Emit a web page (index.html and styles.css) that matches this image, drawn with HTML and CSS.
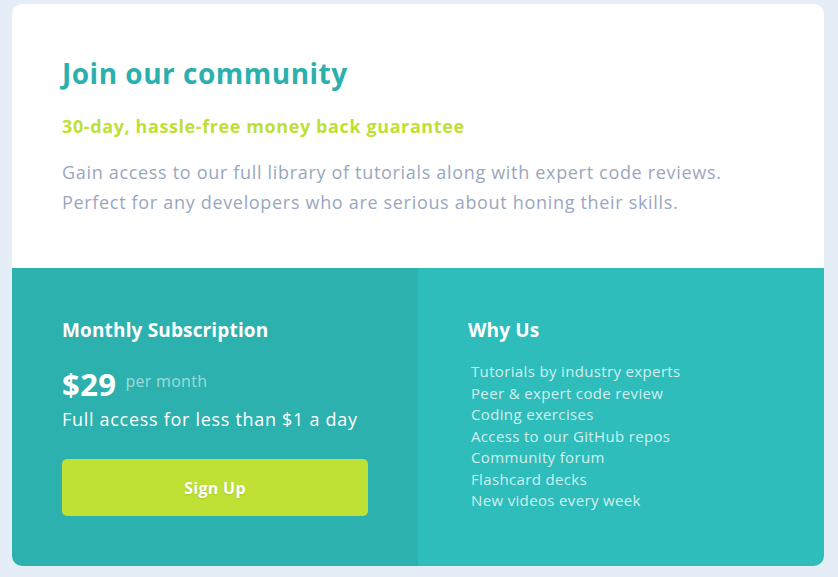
FILE: index.html
```html
<!DOCTYPE html>
<html lang="en">
<head>
<meta charset="utf-8">
<title>Single price grid</title>
<link rel="stylesheet" href="styles.css">
</head>
<body>
<main class="card">
  <section class="intro">
    <h1 class="title">Join our community</h1>
    <h2 class="guarantee">30-day, hassle-free money back guarantee</h2>
    <p class="desc">Gain access to our full library of tutorials along with expert code reviews. Perfect for any developers who are serious about honing their skills.</p>
  </section>
  <div class="bottom">
    <section class="subscription">
      <h3 class="heading">Monthly Subscription</h3>
      <div class="price-row"><span class="price">$29</span><span class="per">per month</span></div>
      <p class="access">Full access for less than $1 a day</p>
      <button class="signup">Sign Up</button>
    </section>
    <section class="why">
      <h3 class="heading">Why Us</h3>
      <ul class="features">
        <li>Tutorials by industry experts</li>
        <li>Peer &amp; expert code review</li>
        <li>Coding exercises</li>
        <li>Access to our GitHub repos</li>
        <li>Community forum</li>
        <li>Flashcard decks</li>
        <li>New videos every week</li>
      </ul>
    </section>
  </div>
</main>
</body>
</html>
```
FILE: styles.css
```css
* { box-sizing: border-box; }
html, body { margin: 0; padding: 0; }
body {
  background: #e5eef6;
  font-family: "Open Sans", "Liberation Sans", sans-serif;
  width: 838px;
  height: 577px;
  overflow: hidden;
}
.card {
  margin: 4px 0 0 12px;
  width: 812px;
  height: 562px;
  border-radius: 10px;
  overflow: hidden;
  background: #fff;
  display: flex;
  flex-direction: column;
}
.intro {
  height: 264px;
  padding: 52px 50px 0 50px;
}
.title {
  margin: 0;
  font-size: 28px;
  line-height: 34px;
  font-weight: 700;
  letter-spacing: 0.5px;
  color: #2bb0ad;
}
.guarantee {
  margin: 24px 0 0 0;
  font-size: 18px;
  line-height: 24px;
  font-weight: 700;
  letter-spacing: 0.6px;
  color: #bfdf34;
}
.desc {
  margin: 19px 0 0 0;
  font-size: 18px;
  line-height: 30px;
  letter-spacing: 0.68px;
  color: #99a7bf;
}
.bottom {
  flex: 1;
  display: flex;
}
.subscription {
  width: 406px;
  background: #2cb1ae;
  padding: 49px 50px 0 50px;
  color: #fff;
}
.why {
  flex: 1;
  background: #2ebdbb;
  padding: 49px 50px 0 50px;
  color: #fff;
}
.heading {
  margin: 0;
  font-size: 19px;
  line-height: 26px;
  font-weight: 700;
  letter-spacing: 0.15px;
}
.price-row {
  display: flex;
  align-items: center;
  gap: 9px;
  margin-top: 22px;
}
.price {
  font-size: 31px;
  line-height: 38px;
  font-weight: 700;
  letter-spacing: 0.4px;
}
.per {
  font-size: 16px;
  letter-spacing: 0.3px;
  color: rgba(255,255,255,0.55);
  margin-top: -6px;
}
.access {
  margin: 3px 0 0 0;
  font-size: 18px;
  line-height: 26px;
  letter-spacing: 0.7px;
}
.signup {
  display: block;
  margin-top: 27px;
  width: 306px;
  height: 57px;
  border: none;
  border-radius: 5px;
  background: #bfe034;
  color: #fff;
  font-family: inherit;
  font-size: 16px;
  letter-spacing: 0.3px;
  font-weight: 700;
  text-shadow: 0 1px 2px rgba(0,0,0,0.1);
}
.features {
  list-style: none;
  margin: 18px 0 0 0;
  padding: 0 0 0 3px;
  font-size: 15px;
  line-height: 21.5px;
  letter-spacing: 0.35px;
  color: rgba(255,255,255,0.78);
}
```
